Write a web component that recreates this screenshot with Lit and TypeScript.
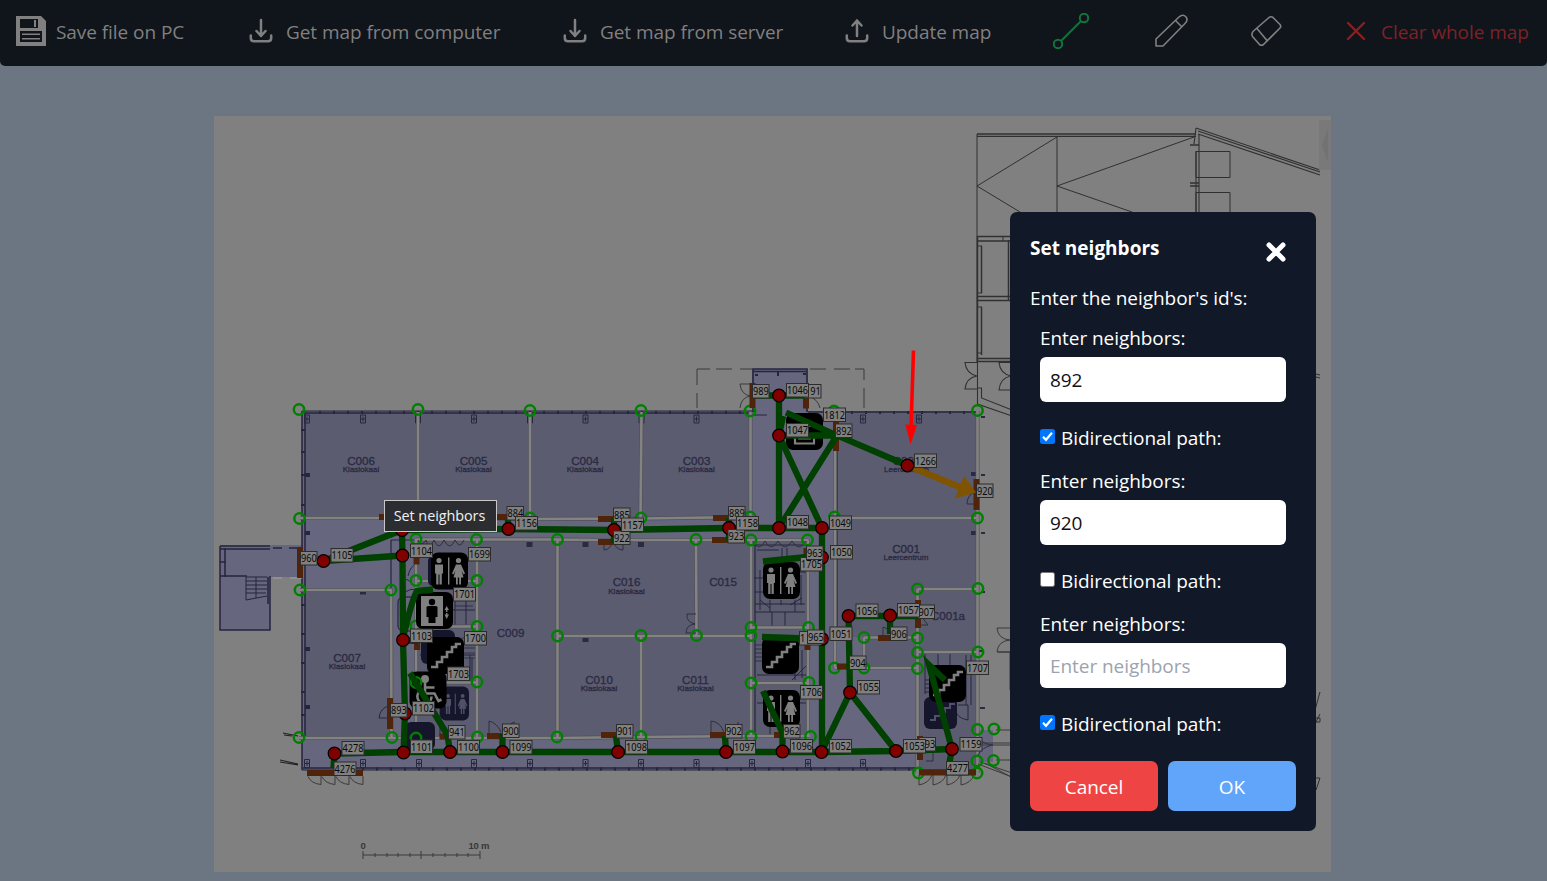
import { LitElement, html, svg, css } from "lit";
import { customElement } from "lit/decorators.js";

type Pt = [number, number];

const RINGS: Pt[] = [
  [299, 409.5], [418, 409.5], [530, 410.5], [641, 410.5], [750, 411], [834, 411], [977.5, 410.5],
  [299.5, 518.5], [530, 518], [641, 518], [750, 517], [834.5, 517], [977.5, 518],
  [416, 539], [476.5, 539.5], [557.5, 539.5], [696, 539.5], [751, 540], [807.5, 540],
  [300, 590], [391, 590], [416, 580.5], [477, 580.5], [416, 626], [477, 626.5], [416, 682.5], [477, 682],
  [299, 737.5], [392, 737.5], [416, 738], [477.5, 737], [557, 737], [641, 736.5], [751, 736.5], [810.5, 736.5],
  [557.5, 636], [641, 635.5], [696.5, 635.5], [751, 635.5], [751, 627.5], [808.5, 627.5], [751, 683], [809, 682.5],
  [917.5, 589], [978, 588.5], [917.5, 638], [864, 637.5], [917.5, 652.5], [978, 652], [917.5, 668.5],
  [864, 668], [834.5, 668], [977.5, 729.5], [994, 729], [993.5, 760.5], [977, 761], [918.5, 773], [977, 773],
];

const NODES: Pt[] = [
  [323.5, 561], [402, 530], [402.5, 555.5], [403, 640], [405, 713.5], [403.5, 752.5], [450, 752], [502.5, 752],
  [508.5, 529], [614, 530], [729, 528], [779, 528], [822, 528], [779, 435.5], [779, 395.5], [907.5, 465.5],
  [822, 557.5], [822, 639], [821.5, 752], [782.5, 751.5], [726, 752], [618, 752], [896, 751], [850, 692.5],
  [848.5, 616], [890, 615.5], [952, 749], [334.5, 753.5],
];

const LABELS: [number, number, string][] = [
  [300.5, 551.5, "960"], [331, 548.5, "1105"], [410.5, 544, "1104"], [468.5, 547.5, "1699"], [453.5, 587.5, "1701"],
  [410.5, 629, "1103"], [464.5, 631.5, "1700"], [447.5, 667, "1703"], [412.5, 701.5, "1102"], [390.5, 703.5, "893"],
  [448.5, 725.5, "941"], [502.5, 724, "900"], [410.5, 740, "1101"], [457.5, 740.5, "1100"], [510, 740.5, "1099"],
  [507, 506.5, "884"], [515.5, 516.5, "1156"], [613.5, 508, "885"], [613.5, 531, "922"], [621.5, 518, "1157"],
  [728.5, 506.5, "889"], [728, 529.5, "923"], [736.5, 516.5, "1158"], [786.5, 515.5, "1048"], [829.5, 516, "1049"],
  [800.5, 557.5, "1705"], [806.5, 546, "963"], [830.5, 545.5, "1050"], [823.5, 408, "1812"], [835.5, 424, "892"],
  [786.5, 423.5, "1047"], [804.5, 384.5, " 91"], [786.5, 383.5, "1046"], [752.5, 384.5, "989"], [914.5, 454, "1266"],
  [976.5, 484, "920"], [856, 604, "1056"], [918, 605, "907"], [897.5, 603.5, "1057"], [890.5, 627, "906"],
  [830, 627, "1051"], [799.5, 631.5, "1   "], [807.5, 630, "965"], [849.5, 656, "904"], [857.5, 680.5, "1055"],
  [800.5, 685.5, "1706"], [783.5, 724.5, "962"], [790.5, 739.5, "1096"], [829.5, 739.5, "1052"], [919, 737.5, " 93"],
  [903.5, 739.5, "1053"], [960, 737.5, "1159"], [966.5, 661, "1707"], [946.5, 761.5, "4277"], [342, 741.5, "4278"],
  [334, 762, "4276"], [733.5, 740.5, "1097"], [725.5, 724.5, "902"], [616.5, 724.5, "901"], [625.5, 740.5, "1098"],
];

const DOORS: [number, number, number, number][] = [
  [297, 547, 6, 31], [379, 514, 8, 6], [497, 514, 12, 6], [598, 516, 17, 6], [598, 539, 17, 6], [713, 515, 17, 6],
  [712, 537, 17, 6], [749.5, 383, 6, 25], [803, 396, 6, 12.5], [833, 422, 6, 29], [973.5, 479, 6, 31],
  [915, 600, 6, 28], [878, 635, 12, 6], [803.5, 548, 5, 9], [804.5, 644, 6, 6], [837, 663.5, 13, 6],
  [774, 732, 10, 6], [917, 736, 6, 24], [919, 769.5, 57, 6], [413.5, 557, 6, 7.5], [414, 643, 6, 7],
  [387, 698, 6, 31], [439.5, 733.5, 9, 6], [487, 733, 16, 6], [601, 732, 16, 6], [710, 732, 16, 6], [307, 770, 56, 6],
];

const EDGES = [
  "M317 561H323.5L402 530L508.5 529L614 530L729 528L779 528L822 528V752",
  "M323.5 561L402.5 555.5M402 530L402.5 555.5L403 640L405 713.5L403.5 752.5",
  "M334.5 753.5L403.5 752H821.5L896 751L952 749M334.5 753.5L333.5 768",
  "M403 637C407 624 411 601 417 591L433 589.5M403 640L418 641",
  "M508 520V529M614 518V543M729 518V541M755 395.5H806M779 395.5V528",
  "M779 435.5L783 416M786 412.5L836 435L907.5 465.5M779 435.5H836M779 435.5L822 528M836 437L779 528",
  "M822 555.5L763 561.5M822 639L762 637M848.5 616H918M890 616V634M848.5 616L850 692.5L821.5 752M850 692.5L896 751",
  "M952 749L929 665L945 680M952 749L949 765M782.5 751.5V733L763 691",
  "M726 752L725 736M618 752L616 736M502.5 752V734M450 752L447.5 735L410 673",
];

const WALLS =
  "M418 412V518M530 412V518M641.5 412L640.5 518M750.5 412V518M300 518H385M418 518L530 519L641 518.5L713 517.5L751 517" +
  "M416 539.5H557.5L600 540L696 540H808M300 590H391L391.5 738M416 539V738M477 539V738M557.5 539V738M557.5 636H751M641 636V737" +
  "M696 540L696.5 636M751 540V737M808 540V737M416 581H477M416 626.5H477M416 682.5H477M299 738H557L641 737L751 736H810" +
  "M835 412V668M835 518H977M977.5 411V773M917.5 589H978M917.5 589V773M864 637.5H917.5M917.5 652H978M864 637.5V668M835 668H917.5" +
  "M751 627.5H808M751 683H809";

const ROOMS: [string, string, number, number][] = [
  ["C006", "Klaslokaal", 361, 460.5], ["C005", "Klaslokaal", 473.5, 460.5], ["C004", "Klaslokaal", 585, 460.5],
  ["C003", "Klaslokaal", 696.5, 460.5], ["C002", "Leercentrum", 906.5, 460.5], ["C016", "Klaslokaal", 626.5, 582],
  ["C015", "", 723, 582], ["C009", "", 510.5, 632.5], ["C007", "Klaslokaal", 347, 657.5], ["C010", "Klaslokaal", 599, 679.5],
  ["C011", "Klaslokaal", 695.5, 679.5], ["C001", "Leercentrum", 906, 548.5], ["C001a", "", 948, 615.5],
];

const man = svg`<circle cx="8" cy="8" r="2.6"/><path d="M4 12H12V21H10.8V32H8.5V22H7.5V32H5.2V21H4Z"/>`;
const woman = svg`<circle cx="27.5" cy="8" r="2.6"/><path d="M25 12H30L34 21L32.5 22L30.5 18L32.5 25H30V32H28.2V25H26.8V32H25V25H22.5L24.5 18L22.5 22L21 21Z"/>`;
const stairsGlyph = svg`<path d="M4 30H10V25H15V20H20V15H25V10H29V7H34" fill="none" stroke="#808080" stroke-width="2.6"/>`;

const signs: Record<string, unknown> = {
  wc: svg`${man}<path d="M17 5H18.4V32H17Z"/>${woman}`,
  stairs: stairsGlyph,
  lift: svg`<path d="M5 4H27V34H5Z"/><g fill="#000"><circle cx="16" cy="10" r="3.2"/><path d="M10.5 15Q11 14 13 14H19Q21 14 21.5 15V25H19.5V31H12.5V25H10.5Z"/></g><path d="M28.5 18L30.7 14L33 18H31.4V20H30V18ZM28.5 22.5H30V21H31.4V22.5H33L30.7 27Z"/>`,
  chair: svg`<circle cx="15.5" cy="7.5" r="4"/><path d="M15.5 11V22H25L29 29.5L32 28M16 16H25M13 18C4 22 8 33 16 32C20 31.5 22 28 22 25" fill="none" stroke="#808080" stroke-width="2.6"/>`,
  desk: svg`<path d="M9 20V30.5H28V20M12 25.500H25M11 17L16 13H27" fill="none" stroke="#808080" stroke-width="2.200"/>`,
};

const SIGN_POS: [string, number, number][] = [
  ["wc", 431, 552.5], ["lift", 416, 592], ["stairs", 427, 637], ["chair", 409.5, 671.5], ["desk", 786, 413],
  ["wc", 763, 562], ["stairs", 762, 637], ["wc", 763, 690], ["stairs", 929, 665],
];

const ticks = (x0: number, x1: number, y: number, step: number) => {
  let d = "";
  for (let x = x0; x <= x1; x += step) d += `M${x} ${y - 1.5}v3`;
  return d;
};

const column = (x: number, y: number) =>
  svg`<path d="M${x - 2.5} ${y}h5v8h-5zM${x - 2} ${y + 4}h4M${x} ${y + 1.5}v5" fill="none" stroke="#27273f" stroke-width="1"/>`;

const planMap = () => svg`
  <rect x="214" y="116" width="1117" height="756" fill="#808080"/>
  <g fill="#66667f">
    <path d="M302 411H753V369H807V411H977V770H302Z"/>
    <path d="M220 545H302V577H270V630H220Z"/>
    <path d="M977 730H993V762H977Z"/>
  </g>
  <path fill="#5c5c70" d="M304 413H750V518H304ZM304 590H391V738H304ZM416 540H751V737H416ZM751 540H808V737H751ZM836 412H977V668H864V637H836ZM918 637H977V771H918Z"/>

  <g fill="none" stroke="#25253f">
    <path d="M304 413H752M302 411V770M305 414V738M303 768H918" stroke-width="1.500"/>
    <path d="M302 411H752M302 770H977" stroke-width="1"/>
    <path d="M808 412H976M753 412V369H807V412M754 371.500H806" stroke-width="1.700"/>
    <path d="M751 415H767M793 415H807"/>
    <path d="M755 375h3M778 372v4M803 374h3" stroke-width="2"/>
    <path d="${ticks(320, 745, 412.5, 14)}${ticks(852, 970, 412.5, 14)}${ticks(335, 910, 769, 14)}" stroke-width="2"/>
    <path d="M301 430h4M301 452h4M301 475h4M301 505h4M301 605h4M301 634h4M301 663h4M301 692h4M301 715h4" stroke-width="2"/>
    <path d="M305 475h5M305 533h5M305 649h5M305 707h5" stroke-width="4"/>
    <path d="M220 546H270M220 549H270M220 546V630H270V577M225 548V577M220 576H247M270 576V577M220 562H226M273 548H282M289 548H302M268 577V604" stroke-width="1.500"/>
    <path d="M246 577V600L267 596M246 577H267M246 581H267M246 585H267M246 589H267M246 593H266M256 577V598" stroke-width="1"/>
    <path d="M391 540H477M391 540V590M478 541V737M751 545H808M755 545V737M837 414V640M918 655V770" stroke-width="1.200"/>
    <path d="M418 590q-16 -4 -16 14v30M419 610h58M455 590v36M466 590v36M440 682V737M458 590v-10M420 655h57M470 655v27M472 658v24M408 576q2 -10 9 -12M404 580q4 -2 8 4" stroke-width="1"/>
    <path d="M455 594h18M455 600h18M455 606h18M462 638h14M462 643h14M462 648h14M462 653h14M462 658h14" stroke-width=".8"/>
    <path d="M757 550h22M782 548v14M787 548v14M801 575v30M796 572h11M754 578h9M754 592h9M760 570v40M770 600v12M781 600v5M795 600v12M755 604h50M755 612h50M772 612v16M785 612v16M757 675h50M795 650v30M802 650v28M770 723v12M757 703h50M792 680l15 -15M760 600l10 8M790 605l12 -7" stroke-width="1"/>
    <path d="M755 645h8M755 649h8M755 653h8M755 657h8M755 661h8" stroke-width=".8"/>
    <path d="M966 655v50M971 655v50M925 680h8M925 684h8M925 688h8M925 692h8M958 705h10v15q-12 -2 -12 -10M925 654v40M938 654v12M950 654v12" stroke-width="1"/>
    <path d="M387 718h-8q1 -10 10 -12" stroke-width="1"/>
    ${[307, 363, 418, 474, 530, 585.5, 641.5, 696.5, 863, 919].map((x) => column(x, 415))}
    ${[307, 363, 419, 474, 530, 585.5, 641, 696.5, 752, 808, 863].map((x) => column(x, 759.5))}
  </g>
  <g fill="#2a2a42">
    ${[[363, 589.5], [529.5, 542], [585.5, 542], [641, 542], [585.5, 637]].map(
      ([x, y]) => svg`<rect x="${x - 3}" y="${y}" width="6" height="5"/>`)}
    <path d="M971 472h5v4h-5zM971 531h5v4h-5zM981 416h4v2h-4zM981 474h4v2h-4zM981 532h4v2h-4zM981 591h4v2h-4zM979 650h4v2h-4zM980 707h5v2h-5z"/>
  </g>

  <path d="${WALLS}" fill="none" stroke="#50505d" stroke-width="4"/>
  <path d="${WALLS}" fill="none" stroke="#838381" stroke-width="2.600"/>

  <g fill="none" stroke="#2f2f40" stroke-width="1">
    <path d="M418 540q3 8 8 0q3 12 8 0q5 12 10 0q6 12 11 0q5 10 9 0M753 541q6 12 12 0q6 12 13 0q7 12 14 0q7 12 14 0"/>
    <path d="M604 541v9q6 0 9 -9q3 9 10 9v-9M696 614h-9q-1 8 8 10q-9 1 -9 9h10M711 735v-14q10 1 13 12M738 722v12M489 733v-12q8 2 12 11M515 722q-8 2 -10 10M976 504h-9q0 -9 8 -12"/>
    <path d="M883 636v-9q5 1 7 5M921 616l7 9h-7M926 761h7v-10M978 737q4 7 15 8q-11 2 -15 10"/>
  </g>

  <g fill="none" stroke="#3a3a3a" stroke-width="1">
    ${[[321, 776], [335, 776], [349, 776], [363, 776]].map(([x, y]) => svg`<path d="M${x} ${y}v8.500q-10 -1 -13 -8"/>`)}
    ${[[919, 775], [933, 775], [947, 775], [961, 775]].map(([x, y]) => svg`<path d="M${x} ${y}v10q10 -2 13 -10"/>`)}
    <path d="M697 408V393M697 385V369H710M716 369H732M740 369H752M810 369H826M834 369H850M855 369H864V380M864 388V408"/>
    <path d="M273 578h9M290 578h12" stroke="#a0a0a0"/>
    <path d="M752 384h-12q1 11 11 12q-10 1 -11 12M808 386q10 2 11 10M808 396q10 3 12 12"/>
    <path d="M283 733l15 3M280 760l18 4M280 762l18 3M284 735l8 1" stroke="#222" stroke-width="1.200"/>
    <path d="M363 855H480M363 851v8M375 853v4M387 853v4M398 853v4M410 853v4M421 851v8M433 853v4M445 853v4M457 853v4M468 853v4M480 851v8"/>
    <path d="M978 743h34M978 745h34M978 764l34 13M980 762l32 11M985 763l28 15M996 730h16M996 760h16M998 730v-3M1010 652v38M998 652h12"/>
    <path d="M1012 628h-15q1 11 13 12q-12 1 -13 12h15"/>
  </g>

  <g fill="none" stroke="#303030" stroke-width="1">
    <path d="M977 134H1196M977 136.300H1196" stroke-width="1.300"/>
    <path d="M977 134V362M1057 137V212M1057 137L977 186L1020 212M1194 137L1057 186L1132 212"/>
    <path d="M1196 128L1320 170M1198 131L1320 172M1198 134L1320 175M1196 128L1194 144M1199 134V212M1196 151V212" stroke-width="1.100"/>
    <path d="M1190 145h9M1190 183h9M1190 186h9" stroke-width="1.500"/>
    <path d="M1196 151.500H1230V177.500H1196ZM1196 212V192.500H1230V212"/>
    <path d="M978 236.500H1012M978 241H1012M1008.500 240V300M977 296.500H1012M977 300.500H1012M981.500 246V293M981.500 307V355M977.500 236V362M977 358.500H1012M977 361.500H1012" stroke-width="1.500"/>
    <path d="M978 246h4M978 293h4M978 307h4M978 353h4M1003 236v5" />
    <path d="M977 362.500h-12q1 11 12 13.500q-11 2 -12 13h12M1010 362.500h-11q1 11 12 13.500q-11 2 -12 14h12M977.500 362V404L1012 416M977.500 388h4v10L1012 410" stroke-width="1.100"/>
    <path d="M1316 374l4 1M1316 377l4 1M1315 710l5 -18M1315 724l5 -10M1316 718h4v4h-4M1316 778h4l-4 12"/>
  </g>
  <path d="M1319 120h12v50h-12z" fill="#797979"/>
  <path d="M1328 128v34l-6 -17z" fill="#727272"/>

  <g class="scale"><text x="360.500" y="849">0</text><text x="468.500" y="849" textLength="21">10 m</text></g>

  <g>
    ${ROOMS.map(([a, b, x, y]) => svg`
      <text class="room" x="${x}" y="${y + 4}">${a}</text>
      <text class="sub" x="${x}" y="${y + 11.7}">${b}</text>`)}
  </g>

  <g fill="#15152c">
    <rect x="398" y="597" width="30" height="34" rx="5" fill="none" stroke="#15152c"/>
    <rect x="428" y="556" width="20" height="30" rx="5"/>
    <rect x="421" y="630" width="34" height="34" rx="6"/>
    <rect x="440" y="686.500" width="29" height="34" rx="6"/>
    <rect x="405" y="722" width="30" height="28" rx="6"/>
    <rect x="924" y="697" width="33" height="32" rx="6"/>
    <g transform="translate(442 690) scale(.75)" fill="#50506a">${signs.wc}</g>
    <path d="M930 720h5v-4h5v-4h5v-4h5v-4h5" fill="none" stroke="#50506a" stroke-width="2"/>
  </g>

  <g fill="none" stroke="#008000" stroke-width="2.500">
    ${RINGS.map(([x, y]) => svg`<circle cx="${x}" cy="${y}" r="5.200"/>`)}
  </g>
  ${SIGN_POS.map(([kind, x, y]) => svg`
    <g transform="translate(${x} ${y})" fill="#808080">
      <rect width="37" height="37" rx="7" fill="#000"/>${signs[kind]}
    </g>`)}
  <circle cx="416" cy="682.500" r="5.200" fill="none" stroke="#008000" stroke-width="2.500"/>

  <g fill="#4f240b">${DOORS.map(([x, y, w, h]) => svg`<rect x="${x}" y="${y}" width="${w}" height="${h}"/>`)}</g>

  <g fill="none" stroke="#004000" stroke-width="6.300">${EDGES.map((d) => svg`<path d="${d}"/>`)}</g>
  <path d="M907.500 465.500L962 488" stroke="#805300" stroke-width="6.300"/>
  <path d="M964 476L976 492.500L955 498.500Z" fill="#805300"/>

  <g fill="#800000" stroke="#000" stroke-width="1.200">
    ${NODES.map(([x, y]) => svg`<circle cx="${x}" cy="${y}" r="6.300"/>`)}
  </g>
  ${LABELS.map(([x, y, t]) => {
    const w = t.length === 4 ? 22 : 16.5;
    const shown = t.trim();
    const from = t.indexOf(shown);
    return svg`
      <rect x="${x}" y="${y}" width="${w}" height="13.500" fill="#808080" stroke="#2c2c2c" stroke-width="1"/>
      <text class="tag" x="${x + 0.6 + from * 5.2}" y="${y + 10.6}" textLength="${shown.length * 5.25}" lengthAdjust="spacingAndGlyphs">${shown}</text>`;
  })}

  <path d="M913.500 350.500L911 428" stroke="#f00" stroke-width="3.600"/>
  <path d="M905.300 424.500L917 425L910.600 444.500Z" fill="#f00"/>
`;

const download = html`<svg class="io" viewBox="0 0 24 26" width="24" height="26">
  <path d="M12 2V18M7.500 13L12 18L16.500 13M1.800 17.500V20Q1.800 23.300 5 23.300H19Q22.200 23.300 22.200 20V17.500"/></svg>`;
const upload = html`<svg class="io" viewBox="0 0 24 26" width="24" height="26">
  <path d="M12 18V2.500M7.500 7.500L12 2.500L16.500 7.500M1.800 17.500V20Q1.800 23.300 5 23.300H19Q22.200 23.300 22.200 20V17.500"/></svg>`;

@customElement("app-root")
export class AppRoot extends LitElement {
  static styles = css`
    :host {
      display: block;
      position: relative;
      height: 881px;
      overflow: hidden;
      background: #6c7682;
      font-family: "Open Sans", "Noto Sans", sans-serif;
      font-size: 19px;
      letter-spacing: -0.06px;
      line-height: 30px;
    }
    * { box-sizing: border-box; }
    .bar {
      display: grid;
      grid-template-columns: 233px 314px 282px 208px 102px 96px 95px 1fr;
      align-items: center;
      height: 66px;
      padding: 0 0 4px 16px;
      border-radius: 0 0 5px 5px;
      background: #10141b;
      color: #808080;
    }
    .item { display: flex; align-items: center; white-space: nowrap; }
    .item span { padding-top: 2px; }
    .item svg { display: block; fill: none; stroke: #808080; stroke-width: 1.6; }
    .item .io { margin-right: 13px; stroke-width: 2.5; stroke-linecap: round; stroke-linejoin: round; }
    .item .floppy { margin-right: 10px; stroke: none; }
    .item .link { stroke: #11743a; stroke-width: 2; }
    .item .cross { margin-right: 15px; stroke: #8a2020; stroke-width: 2.4; stroke-linecap: round; }
    .danger { color: #7d2226; }
    .canvas { display: block; margin: 50px 0 0 214px; letter-spacing: 0; }
    .room, .sub { text-anchor: middle; font-family: "Liberation Sans", sans-serif; fill: #2b2b44; }
    .room { font-size: 11.6px; stroke: #2b2b44; stroke-width: 0.35; }
    .sub { font-size: 8px; stroke: #2b2b44; stroke-width: 0.35; }
    .scale { font: 700 9.5px "Liberation Sans", sans-serif; fill: #383838; }
    .tag { font: 10px "Noto Sans", sans-serif; fill: #080808; }
    .tip {
      position: absolute;
      left: 384px;
      top: 500px;
      width: 113px;
      height: 32px;
      padding-right: 2px;
      border: 1px solid #c8c8c8;
      background: #2b2d31;
      color: #f2f2f2;
      font-size: 14.4px;
      line-height: 30px;
      text-align: center;
      white-space: nowrap;
    }
    .dialog {
      position: absolute;
      left: 1010px;
      top: 212px;
      width: 306px;
      height: 618.5px;
      padding: 20px;
      border-radius: 7px;
      background: #111827;
      color: #fff;
    }
    .head { display: flex; justify-content: space-between; height: 51px; padding-right: 9px; }
    .title { font-weight: 700; line-height: 32px; letter-spacing: 0; }
    .close { margin-top: 9px; stroke: #fff; stroke-width: 5; stroke-linecap: round; }
    .intro { height: 40px; white-space: nowrap; }
    .group { display: flex; flex-direction: column; height: 143px; padding: 0 10px; }
    .field {
      width: 246px;
      height: 45px;
      margin: 4px 0 21px;
      padding: 1px 10px 0;
      border: 0;
      border-radius: 6px;
      background: #fff;
      color: #111;
      font: inherit;
      letter-spacing: inherit;
    }
    .field::placeholder { color: #9ca3af; opacity: 1; }
    .check { display: flex; gap: 6px; white-space: nowrap; }
    .box { display: block; width: 15px; height: 15px; margin-top: 6px; flex: none; }
    .actions { display: flex; gap: 10px; margin-top: 9px; }
    .btn {
      width: 128px;
      height: 50px;
      padding: 2px 0 0;
      border: 0;
      border-radius: 7px;
      background: #ef4444;
      color: #fff;
      font: inherit;
      letter-spacing: inherit;
    }
    .ok { background: #60a5fa; }
  `;

  private group(value: string, checked: boolean) {
    return html`<div class="group">
      <div>Enter neighbors:</div>
      <input class="field" placeholder="Enter neighbors" .value=${value} />
      <div class="check">
        <svg class="box" viewBox="0 0 15 15">
          ${checked
            ? svg`<rect width="15" height="15" rx="2.500" fill="#0075ff"/><path d="M3 7.800L6 10.800L12 3.800" fill="none" stroke="#fff" stroke-width="2.200"/>`
            : svg`<rect x=".5" y=".5" width="14" height="14" rx="2" fill="#fff" stroke="#767676"/>`}
        </svg>
        <span>Bidirectional path:</span>
      </div>
    </div>`;
  }

  render() {
    return html`
      <div class="bar">
        <div class="item">
          <svg class="floppy" width="30" height="30" viewBox="0 0 30 30">
            <path fill="#808080" d="M0 0H25L30 5V30H0Z" />
            <path fill="#10141b" d="M4 3H22V12H4ZM4 15H26V26H4Z" />
            <path fill="#808080" d="M18 4H20V11H18ZM6 17.500H24V19H6ZM6 22H24V23.500H6Z" />
          </svg>
          <span>Save file on PC</span>
        </div>
        <div class="item">${download}<span>Get map from computer</span></div>
        <div class="item">${download}<span>Get map from server</span></div>
        <div class="item">${upload}<span>Update map</span></div>
        <div class="item">
          <svg class="link" width="36" height="36" viewBox="0 0 36 36">
            <circle cx="5" cy="31" r="4.200" /><circle cx="31" cy="5" r="4.200" /><path d="M8 28L28 8" />
          </svg>
        </div>
        <div class="item">
          <svg width="33" height="34" viewBox="0 0 33 34">
            <path stroke-linejoin="round" d="M1 25L24 3Q28 -0.500 31 3Q33.500 6 30 9.500L8 32H1ZM20.500 6.500L27 13" />
          </svg>
        </div>
        <div class="item">
          <svg width="31" height="32" viewBox="0 0 31 32">
            <path stroke-linejoin="round" d="M2.500 16L18 2.500Q20 1 22 2.500L29 9.500Q30.500 11.500 29 13L12.500 29.500Q10.500 31 8.500 29.500L1.500 21.500Q0 18.500 2.500 16ZM6 13.500L16 25.500" />
          </svg>
        </div>
        <div class="item danger">
          <svg class="cross" width="20" height="20" viewBox="0 0 20 20"><path d="M2 2L18 18M18 2L2 18" /></svg>
          <span>Clear whole map</span>
        </div>
      </div>
      <svg class="canvas" width="1117" height="756" viewBox="214 116 1117 756">${planMap()}</svg>
      <div class="tip">Set neighbors</div>
      <div class="dialog">
        <div class="head">
          <span class="title">Set neighbors</span>
          <svg class="close" width="22" height="22" viewBox="0 0 22 22"><path d="M4 4L18 18M18 4L4 18" /></svg>
        </div>
        <div class="intro">Enter the neighbor's id's:</div>
        ${this.group("892", true)} ${this.group("920", false)} ${this.group("", true)}
        <div class="actions">
          <button class="btn">Cancel</button>
          <button class="btn ok">OK</button>
        </div>
      </div>
    `;
  }
}
